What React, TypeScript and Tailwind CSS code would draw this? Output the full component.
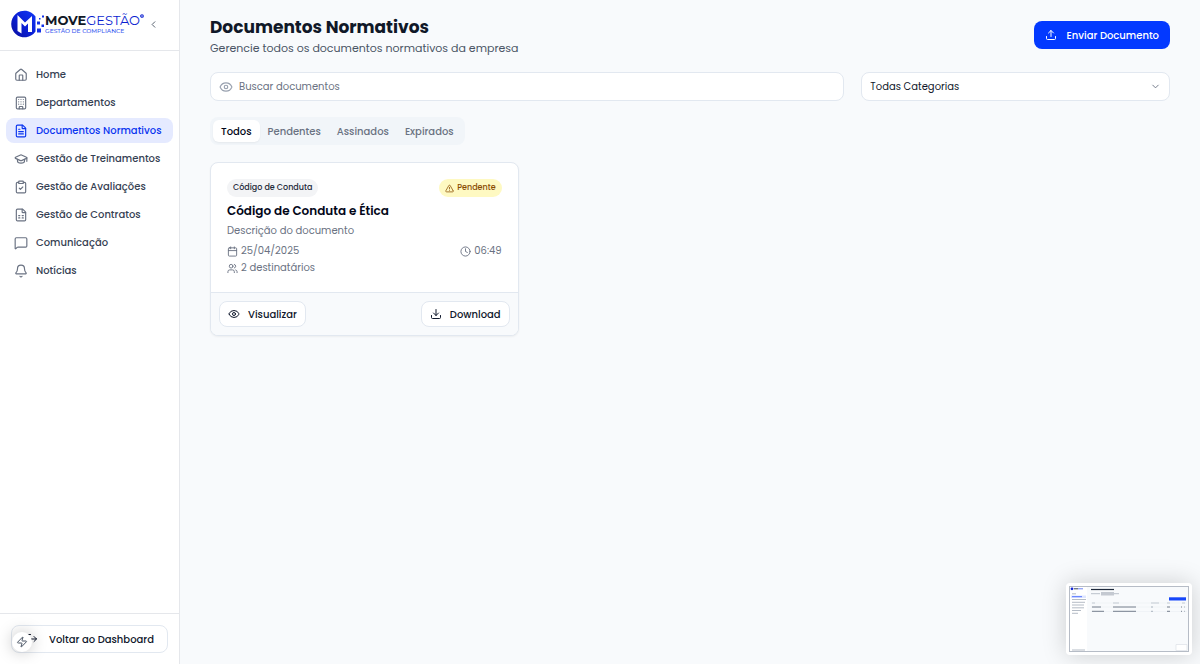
import type { ReactNode } from "react";
import {
  Bell,
  Building,
  Calendar,
  ChevronDown,
  ChevronLeft,
  ClipboardCheck,
  Clock,
  Download,
  Eye,
  FileSpreadsheet,
  FileText,
  GraduationCap,
  House,
  LogOut,
  MessageSquare,
  TriangleAlert,
  Upload,
  Users,
  Zap,
} from "lucide-react";

const navItems = [
  { label: "Home", icon: House },
  { label: "Departamentos", icon: Building },
  { label: "Documentos Normativos", icon: FileText, active: true },
  { label: "Gestão de Treinamentos", icon: GraduationCap },
  { label: "Gestão de Avaliações", icon: ClipboardCheck },
  { label: "Gestão de Contratos", icon: FileSpreadsheet },
  { label: "Comunicação", icon: MessageSquare },
  { label: "Notícias", icon: Bell },
];

const tabs = ["Todos", "Pendentes", "Assinados", "Expirados"];

function Logo() {
  return (
    <a href="#" className="flex items-center text-[#0b1fd0]">
      <svg className="w-[34px] h-7 shrink-0" viewBox="0 0 34 28">
        <defs>
          <linearGradient id="disc" x1="0" y1="1" x2="1" y2="0">
            <stop offset="0" stopColor="#0a0f9c" />
            <stop offset="0.5" stopColor="#0a1fd6" />
            <stop offset="1" stopColor="#1238f5" />
          </linearGradient>
        </defs>
        <path d="M24.500 6.500A13.300 13.300 0 1 0 24.500 21.500Z" fill="url(#disc)" />
        <path d="M6.500 5L14 12.500L21 6V22H17V13.500L14 16.500L10.500 13V23.500L6.500 21Z" fill="#fff" />
        <path
          d="M26 11.500h3v3h-3zM26 18.500h4v4h-4zM31 5.500h2v2h-2zM30.500 14.500h2.500v2.500h-2.500zM28 8h1.500v1.500h-1.500z"
          fill="#1230e8"
        />
      </svg>
      <span className="flex flex-col gap-px whitespace-nowrap font-[Montserrat,Inter,sans-serif]">
        <span className="flex items-start text-[13px] leading-[13px]">
          <strong className="font-bold text-[#111827]">MOVE</strong>
          GESTÃO
          <svg className="size-1 shrink-0" viewBox="0 0 5 5">
            <circle cx="2.5" cy="2.5" r="1.6" fill="none" stroke="currentColor" strokeWidth="1.4" />
          </svg>
        </span>
        <span className="text-[6px] leading-[6px] font-medium text-[#3b5bf0]">GESTÃO DE COMPLIANCE</span>
      </span>
    </a>
  );
}

function Sidebar() {
  return (
    <aside className="flex w-[180px] shrink-0 flex-col border-r border-gray-200 bg-white">
      <div className="flex h-[51px] items-center justify-between border-b border-gray-200 pl-[11px] pr-5 pb-[2px]">
        <Logo />
        <button type="button" aria-label="Recolher menu" className="text-gray-600">
          <ChevronLeft className="size-[11px]" />
        </button>
      </div>

      <nav className="flex flex-1 flex-col gap-[3px] px-[6px] pt-[11px]">
        {navItems.map(({ label, icon: Icon, active }) => (
          <a
            key={label}
            href="#"
            className={`flex h-[25px] items-center gap-2 rounded-lg px-2 font-medium whitespace-nowrap ${
              active ? "bg-[#e5eaff] text-[#0a35f0]" : "text-gray-700"
            }`}
          >
            <Icon className={`size-[14px] shrink-0 ${active ? "" : "text-gray-500"}`} />
            {label}
          </a>
        ))}
      </nav>

      <div className="border-t border-gray-200 p-[11px]">
        <button
          type="button"
          className="flex h-7 w-full items-center gap-[11px] rounded-lg border border-slate-200 bg-white px-[14px] font-medium whitespace-nowrap text-slate-900"
        >
          <LogOut className="size-3 shrink-0" />
          Voltar ao Dashboard
        </button>
      </div>
    </aside>
  );
}

function OutlineButton({ children }: { children: ReactNode }) {
  return (
    <button
      type="button"
      className="flex h-[26px] items-center gap-2 rounded-lg border border-slate-200 bg-white px-2 font-medium text-slate-900"
    >
      {children}
    </button>
  );
}

function DocumentCard() {
  return (
    <article className="overflow-hidden rounded-lg border border-slate-200 bg-white shadow-xs">
      <div className="flex flex-col p-4 text-gray-500">
        <div className="flex items-center justify-between text-[8px] font-medium">
          <span className="flex h-[18px] items-center rounded-full bg-gray-100 px-[6px] text-gray-800">
            Código de Conduta
          </span>
          <span className="flex h-[18px] items-center gap-[3px] rounded-full bg-yellow-100 px-[6px] text-yellow-800">
            <TriangleAlert className="size-[9px]" />
            Pendente
          </span>
        </div>
        <h2 className="mt-1 text-[12px] leading-5 font-semibold text-slate-950">Código de Conduta e Ética</h2>
        <p className="mt-[2px] leading-4">Descrição do documento</p>
        <div className="mt-1 flex items-center justify-between leading-4">
          <span className="flex items-center gap-[3px]">
            <Calendar className="size-[11px]" />
            25/04/2025
          </span>
          <span className="flex items-center gap-[3px]">
            <Clock className="size-[11px]" />
            06:49
          </span>
        </div>
        <span className="mt-px flex items-center gap-[3px] leading-4">
          <Users className="size-[11px]" />2 destinatários
        </span>
      </div>
      <div className="flex items-center justify-between border-t border-slate-200 bg-slate-50 p-2">
        <OutlineButton>
          <Eye className="size-3" />
          Visualizar
        </OutlineButton>
        <OutlineButton>
          <Download className="size-3" />
          Download
        </OutlineButton>
      </div>
    </article>
  );
}

// Floating miniature of the departments page
function PagePreview() {
  return (
    <div className="fixed right-2 bottom-[9px] rounded-sm bg-white p-[3px] shadow-[0_0_24px_rgba(0,0,0,0.18)]">
      <svg className="block h-[66px] w-[120px]" viewBox="0 0 120 66">
        <rect x="0.500" y="0.500" width="119" height="65" fill="#f8fafc" stroke="#b6bcc6" />
        <path d="M1 1h17v64H1z" fill="#fff" />
        <circle cx="3" cy="2.800" r="1.400" fill="#1226d8" />
        <path d="M5 2.800h4" stroke="#334155" />
        <path d="M9 2.800h5" stroke="#6d83f5" />
        <path d="M2 9.500h15v2.500H2z" fill="#dfe6ff" />
        <path d="M3 10.700h10" stroke="#5272ff" />
        <path
          d="M3 7.800h4M3 13.500h14M3 16.300h13M3 19h12M3 21.800h12M3 24.500h9M3 27.300h6M3 64h13"
          stroke="#a2abb8"
          strokeWidth="0.800"
        />
        <path d="M22 3.500h23" stroke="#1e293b" strokeWidth="1.200" />
        <path d="M22 7.700h9M45 7.700h5" stroke="#aab2be" strokeWidth="0.800" />
        <path d="M32 6h13v3.500H32z" fill="#c4c9d1" />
        <path d="M100 11.300h17v3.200h-17z" fill="#1646fa" />
        <path d="M22 17h96M22 21h96M22 25.500h96" stroke="#e8edf3" strokeWidth="0.500" />
        <path d="M23 17h3M44 17h6M82 17h8M98 17h3M113 17h3" stroke="#b9c0ca" strokeWidth="0.800" />
        <path
          d="M23 21h9M44 21h23M98 21h3M112 21h1M23 25.300h12M44 25.300h23M98 25.300h3M112 25.300h1"
          stroke="#667080"
          strokeWidth="0.900"
        />
        <path d="M82 21h2M115 21h1M82 25.300h2M115 25.300h1" stroke="#a2abb8" strokeWidth="0.900" />
        <path d="M107 58.500h11v6h-11z" fill="#fff" stroke="#dce1e7" strokeWidth="0.700" />
      </svg>
    </div>
  );
}

export default function App() {
  return (
    <div className="flex min-h-screen bg-slate-50 font-[Poppins,Inter,sans-serif] text-[10px]">
      <Sidebar />

      <main className="flex min-w-0 flex-1 flex-col px-[30px] pt-[14px]">
        <header className="flex items-center justify-between pb-4">
          <div>
            <h1 className="text-[17px] leading-[26px] font-bold text-gray-900">Documentos Normativos</h1>
            <p className="text-[11px] leading-4 text-gray-600">Gerencie todos os documentos normativos da empresa</p>
          </div>
          <button
            type="button"
            className="flex h-7 items-center gap-[10px] rounded-lg bg-[#0339ff] px-[11px] font-medium text-white"
          >
            <Upload className="size-3" />
            Enviar Documento
          </button>
        </header>

        <div className="grid grid-cols-3 gap-[17px]">
          <label className="col-span-2 flex h-[29px] items-center gap-[6px] rounded-lg border border-slate-200 bg-white px-2 text-gray-400">
            <Eye className="size-[14px] shrink-0" />
            <input
              type="text"
              aria-label="Buscar documentos"
              placeholder="Buscar documentos"
              className="min-w-0 flex-1 text-slate-900 outline-none placeholder:text-gray-500"
            />
          </label>
          <div className="relative">
            <select
              aria-label="Categoria"
              className="h-[29px] w-full appearance-none rounded-lg border border-slate-200 bg-white px-2 text-slate-900"
            >
              <option>Todas Categorias</option>
            </select>
            <ChevronDown className="pointer-events-none absolute top-[9px] right-[9px] size-[11px] text-gray-500" />
          </div>
        </div>

        <div role="tablist" className="mt-4 flex h-7 items-center self-start rounded-lg bg-slate-100 p-[3px]">
          {tabs.map((tab, i) => (
            <button
              key={tab}
              type="button"
              role="tab"
              aria-selected={i === 0}
              className={`h-full rounded-md px-2 font-medium ${
                i === 0 ? "bg-white text-slate-950 shadow-xs" : "text-gray-500"
              }`}
            >
              {tab}
            </button>
          ))}
        </div>

        <div className="mt-[17px] grid grid-cols-3 gap-[17px]">
          <DocumentCard />
        </div>
      </main>

      <button
        type="button"
        aria-label="Ferramentas"
        className="fixed bottom-3 left-3 flex size-5 items-center justify-center rounded-full bg-white text-gray-600 shadow-[0_0_16px_rgba(0,0,0,0.25)]"
      >
        <Zap className="size-3" />
      </button>
      <PagePreview />
    </div>
  );
}
